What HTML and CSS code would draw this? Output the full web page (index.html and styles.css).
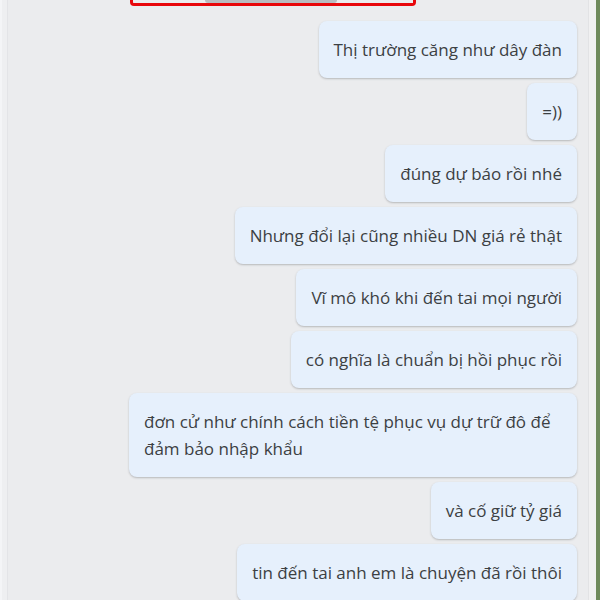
FILE: index.html
```html
<!DOCTYPE html>
<html lang="vi">
<head>
    <meta charset="UTF-8">
    <meta name="viewport" content="width=device-width, initial-scale=1.0">
    <title>Tin nhắn</title>
    <link rel="stylesheet" href="styles.css">
</head>
<body>
    <div class="window">
        <div class="edge-left"></div>

        <div class="chat">
            <!-- khung đỏ đánh dấu phía trên -->
            <div class="mark">
                <div class="date-chip"></div>
            </div>

            <div class="messages">
                <div class="bubble">Thị trường căng như dây đàn</div>
                <div class="bubble">=))</div>
                <div class="bubble">đúng dự báo rồi nhé</div>
                <div class="bubble">Nhưng đổi lại cũng nhiều DN giá rẻ thật</div>
                <div class="bubble">Vĩ mô khó khi đến tai mọi người</div>
                <div class="bubble">có nghĩa là chuẩn bị hồi phục rồi</div>
                <div class="bubble">đơn cử như chính cách tiền tệ phục vụ dự trữ đô để đảm bảo nhập khẩu</div>
                <div class="bubble">và cố giữ tỷ giá</div>
                <div class="bubble">tin đến tai anh em là chuyện đã rồi thôi</div>
            </div>
        </div>

        <div class="scroll-strip"></div>
        <div class="behind"></div>
    </div>
</body>
</html>
```

FILE: styles.css
```css
html, body {
    margin: 0;
    padding: 0;
    height: 100%;
    overflow: hidden;
}
body {
    font-family: "Open Sans", Roboto, sans-serif;
    background-color: #ebecee;
}
.window {
    display: flex;
    height: 600px;
}
.edge-left {
    width: 5px;
    border-left: 2px solid #f4f5f7;
    border-right: 1px solid #e3e4e7;
    background-color: #eeeff1;
}
.chat {
    flex: 1;
    display: flex;
    flex-direction: column;
    overflow: hidden;
}
.mark {
    margin-left: 122px;
    width: 280px;
    height: 4px;
    border: 3px solid #e8070b;
    border-top: none;
    border-radius: 0 0 4px 4px;
    display: flex;
    justify-content: center;
}
.date-chip {
    width: 132px;
    height: 3px;
    margin-left: -4px;
    background-color: #b9bcc0;
    border-radius: 0 0 8px 8px;
}
.messages {
    display: flex;
    flex-direction: column;
    align-items: flex-end;
    gap: 5px;
    padding: 15px 11px 0 0;
}
.bubble {
    max-width: 418px;
    padding: 15px 15px 15px;
    background-color: #e6f0fc;
    color: #3c4043;
    font-size: 17px;
    line-height: 27px;
    border-radius: 8px;
    box-shadow: 0 1px 2px rgba(60, 64, 67, 0.3);
}
.scroll-strip {
    width: 7px;
    background-color: #f1f1f2;
    border-left: 1px solid #e2e3e5;
}
.behind {
    width: 4px;
    background-color: #6f8a5c;
}
```
